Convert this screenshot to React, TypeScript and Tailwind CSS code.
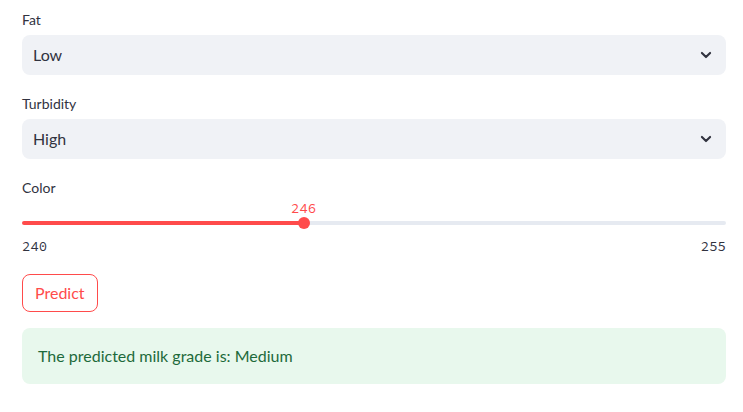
const font = { fontFamily: '"Source Sans Pro", Lato, "Noto Sans", sans-serif' };
const mono = { fontFamily: '"Source Code Pro", "DejaVu Sans Mono", monospace' };

const Chevron = () => (
  <svg width="14" height="14" viewBox="0 0 24 24" fill="none" className="text-[#31333f]">
    <path d="M5 8.5l7 7 7-7" stroke="currentColor" strokeWidth="3.6" strokeLinecap="round" strokeLinejoin="round" />
  </svg>
);

const SelectBox = ({ label, value }: { label: string; value: string }) => (
  <div className="flex flex-col">
    <div className="h-6 text-sm leading-6 text-[#31333f] mb-[3px]">{label}</div>
    <div className="h-10 bg-[#f0f2f6] rounded-lg flex items-center justify-between pl-[11px] pr-[13px]">
      <span className="text-base text-[#31333f]">{value}</span>
      <Chevron />
    </div>
  </div>
);

export default function App() {
  const min = 240;
  const max = 255;
  const val = 246;
  const pct = ((val - min) / (max - min)) * 100;

  return (
    <div className="w-[743px] h-[412px] bg-white" style={font}>
      <div className="px-[22px] pt-[8px] flex flex-col w-[748px]">
        <SelectBox label="Fat" value="Low" />
        <div className="h-[17px]" />
        <SelectBox label="Turbidity" value="High" />
        <div className="h-[17px]" />
        <div className="h-6 text-sm leading-6 text-[#31333f]">Color</div>
        <div className="relative h-[58px]">
          <div
            className="absolute top-[-2px] text-sm text-[#ff4b4b] -translate-x-1/2"
            style={{ left: `${pct}%`, ...mono }}
          >
            {val}
          </div>
          <div
            className="absolute top-[21px] left-0 right-0 h-1 rounded-full"
            style={{ background: `linear-gradient(to right, #ff4b4b ${pct}%, #e6eaf1 ${pct}%)` }}
          />
          <div
            className="absolute top-[17px] w-3 h-3 rounded-full bg-[#ff4b4b] -translate-x-1/2"
            style={{ left: `${pct}%` }}
          />
          <div
            className="absolute top-[36px] left-0 right-0 flex justify-between text-sm text-[#31333f]"
            style={mono}
          >
            <span>{min}</span>
            <span>{max}</span>
          </div>
        </div>
        <div className="mt-[16px]">
          <button className="h-[38px] px-3 border border-[#ff4b4b] rounded-lg text-base text-[#ff4b4b] bg-white">
            Predict
          </button>
        </div>
        <div className="mt-[16px] h-14 rounded-lg bg-[#e8f8ed] flex items-center px-4 text-base text-[#1d6a3b]">
          The predicted milk grade is: Medium
        </div>
      </div>
    </div>
  );
}
